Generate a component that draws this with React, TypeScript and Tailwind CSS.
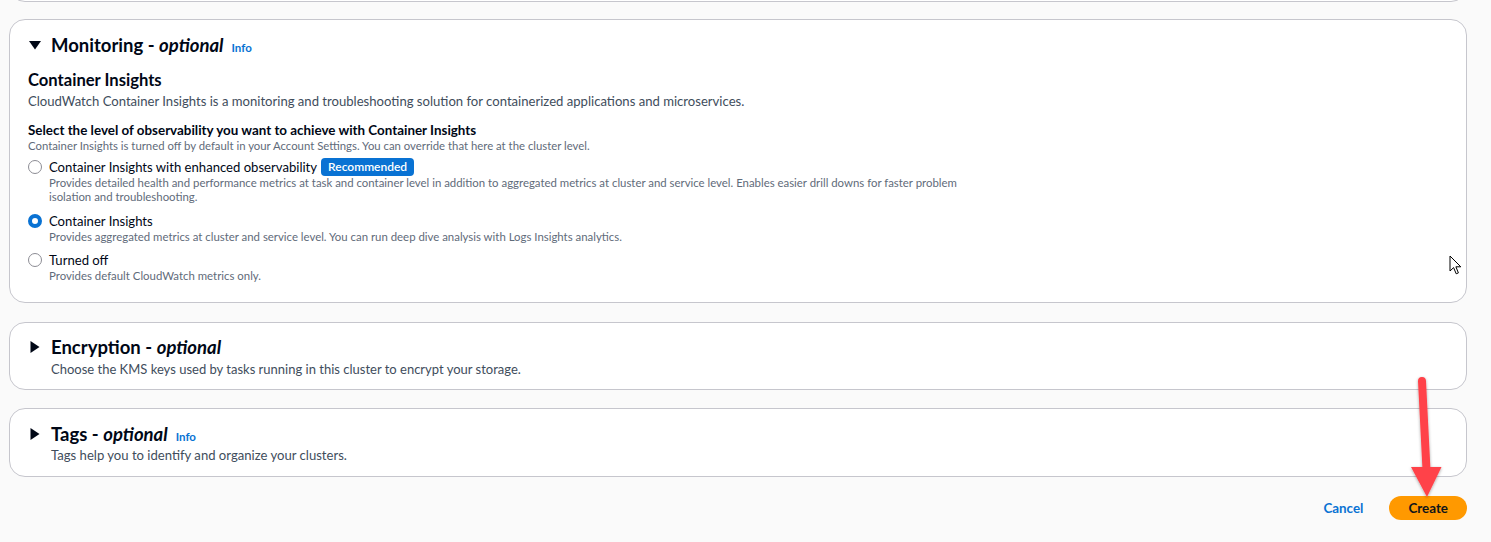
import React from "react";

function TriDown() {
  return (
    <svg width="12" height="9" viewBox="0 0 12 9" className="shrink-0">
      <path d="M0 0 L12 0 L6 8.5 Z" fill="#000716" />
    </svg>
  );
}

function TriRight() {
  return (
    <svg width="10" height="12" viewBox="0 0 10 12" className="shrink-0">
      <path d="M0.5 0 L9.5 6 L0.5 12 Z" fill="#000716" />
    </svg>
  );
}

function Radio({ checked }: { checked?: boolean }) {
  return checked ? (
    <span className="mt-[2px] block h-[14px] w-[14px] shrink-0 rounded-full border-[4px] border-[#0972d3] bg-white" />
  ) : (
    <span className="mt-[2px] block h-[14px] w-[14px] shrink-0 rounded-full border-[1.5px] border-[#8c8c94] bg-white" />
  );
}

function Option({
  checked,
  label,
  badge,
  desc,
  className,
}: {
  checked?: boolean;
  label: string;
  badge?: string;
  desc: string;
  className?: string;
}) {
  return (
    <div className={"flex gap-[7px] " + (className ?? "")}>
      <Radio checked={checked} />
      <div className="flex flex-col">
        <div className="flex items-center gap-[4px] text-[13.1px] leading-[18px] text-[#000716]">
          <span>{label}</span>
          {badge && (
            <span className="flex h-[18px] items-center rounded-[4px] bg-[#0972d3] px-[7px] text-[12px] font-semibold leading-[18px] text-white">
              {badge}
            </span>
          )}
        </div>
        <p className="max-w-[925px] text-[11.4px] leading-[14px] text-[#5f6b7a]">{desc}</p>
      </div>
    </div>
  );
}

function Title({ name, info, open }: { name: string; info?: boolean; open?: boolean }) {
  return (
    <div className="flex h-[22px] items-center gap-[10px]">
      <span className="ml-[1px] flex w-[12px] justify-center">{open ? <TriDown /> : <TriRight />}</span>
      <div className="flex items-baseline gap-[8px]">
        <h2 className="text-[18.5px] font-bold leading-[22px] text-[#000716]">
          {name} - <i className="font-bold">optional</i>
        </h2>
        {info && <a className="text-[11.5px] font-bold leading-[14px] text-[#0972d3]">Info</a>}
      </div>
    </div>
  );
}

export default function App() {
  return (
    <div className="relative min-h-[542px] overflow-hidden bg-[#fafafa] pb-[22px] pl-[9px] pr-[24px] font-[family-name:Lato,'Liberation_Sans',sans-serif]">
      {/* previous card (only its bottom edge is visible) */}
      <div className="-mt-[38px] h-[40px] rounded-[16px] border border-[#c6c6cd] bg-white" />

      {/* Monitoring */}
      <section className="mt-[17px] rounded-[16px] border border-[#c6c6cd] bg-white px-[18px] pb-[19px] pt-[14px]">
        <Title name="Monitoring" info open />
        <h3 className="mt-[14px] text-[16.6px] font-bold leading-[20px] text-[#000716]">Container Insights</h3>
        <p className="mt-[2px] text-[13.1px] leading-[18px] text-[#414d5c]">
          CloudWatch Container Insights is a monitoring and troubleshooting solution for containerized applications and microservices.
        </p>
        <div className="mt-[12px] text-[13.4px] font-bold leading-[16px] text-[#000716]">
          Select the level of observability you want to achieve with Container Insights
        </div>
        <div className="mt-[1px] text-[11.35px] leading-[14px] text-[#5f6b7a]">
          Container Insights is turned off by default in your Account Settings. You can override that here at the cluster level.
        </div>
        <div className="mt-[5px] flex flex-col">
          <Option
            label="Container Insights with enhanced observability"
            badge="Recommended"
            desc="Provides detailed health and performance metrics at task and container level in addition to aggregated metrics at cluster and service level. Enables easier drill downs for faster problem isolation and troubleshooting."
          />
          <Option
            className="mt-[8px]"
            checked
            label="Container Insights"
            desc="Provides aggregated metrics at cluster and service level. You can run deep dive analysis with Logs Insights analytics."
          />
          <Option className="mt-[7px]" label="Turned off" desc="Provides default CloudWatch metrics only." />
        </div>
      </section>

      {/* Encryption */}
      <section className="mt-[19px] rounded-[16px] border border-[#c6c6cd] bg-white px-[18px] pb-[11px] pt-[13px]">
        <Title name="Encryption" />
        <p className="ml-[23px] mt-[2px] text-[13px] leading-[18px] text-[#414d5c]">
          Choose the KMS keys used by tasks running in this cluster to encrypt your storage.
        </p>
      </section>

      {/* Tags */}
      <section className="mt-[18px] rounded-[16px] border border-[#c6c6cd] bg-white px-[18px] pb-[12px] pt-[14px]">
        <Title name="Tags" info />
        <p className="ml-[23px] mt-[1px] text-[13.1px] leading-[18px] text-[#414d5c]">
          Tags help you to identify and organize your clusters.
        </p>
      </section>

      {/* Actions */}
      <div className="mt-[19px] flex items-center justify-end gap-[26px]">
        <a className="text-[13.4px] font-bold leading-[16px] text-[#0972d3]">Cancel</a>
        <button className="h-[24px] rounded-full bg-[#ff9900] px-[19px] text-[13.4px] font-bold leading-[24px] text-[#0f141a]">
          Create
        </button>
      </div>

      {/* mouse cursor */}
      <svg className="absolute left-[1449px] top-[255px]" width="14" height="21" viewBox="0 0 14 21">
        <path d="M1 1 L1 16 L4.6 12.6 L7.2 18.8 L9.4 17.9 L6.9 11.8 L11.8 11.8 Z" fill="#fff" stroke="#000" strokeWidth="1" strokeLinejoin="round" />
      </svg>

      {/* red annotation arrow */}
      <svg className="absolute left-[1400px] top-[370px]" width="60" height="135" viewBox="0 0 60 135">
        <defs>
          <filter id="sh" x="-50%" y="-20%" width="200%" height="150%">
            <feDropShadow dx="0" dy="1" stdDeviation="1.5" floodColor="#000" floodOpacity="0.35" />
          </filter>
        </defs>
        <g filter="url(#sh)">
          <line x1="22" y1="11" x2="26.5" y2="100" stroke="#ff434a" strokeWidth="8" strokeLinecap="round" />
          <path d="M11 97 L41.5 97 L27 127 Z" fill="#ff434a" />
        </g>
      </svg>
    </div>
  );
}
